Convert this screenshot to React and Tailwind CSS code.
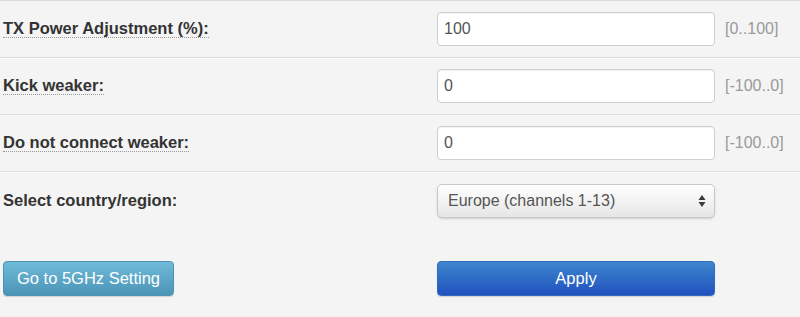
import { useState } from "react";

const rows = [
  { label: "TX Power Adjustment (%):", value: "100", range: "[0..100]" },
  { label: "Kick weaker:", value: "0", range: "[-100..0]" },
  { label: "Do not connect weaker:", value: "0", range: "[-100..0]" },
];

export default function App() {
  const [values, setValues] = useState(rows.map((r) => r.value));
  const [country, setCountry] = useState("eu");

  return (
    <div
      className="w-[800px] h-[317px] bg-[#f4f4f4] text-[#333] overflow-hidden"
      style={{ fontFamily: '"Liberation Sans", Arial, sans-serif' }}
    >
      <div className="border-t border-[#dcdcdc]">
        {rows.map((row, i) => (
          <div
            key={row.label}
            className="flex items-center h-[57px] border-b border-[#dcdcdc] shadow-[0_1px_0_#fafafa]"
          >
            <div className="w-[437px] pl-[3px]">
              <span className="text-[16.5px] font-bold leading-[20px] border-b border-dotted border-[#999] cursor-help">
                {row.label}
              </span>
            </div>
            <input
              type="text"
              value={values[i]}
              onChange={(e) =>
                setValues((prev) => prev.map((v, j) => (j === i ? e.target.value : v)))
              }
              className="w-[278px] h-[34px] px-[6px] rounded-[4px] border border-[#cfcfcf] bg-white text-[16px] text-[#555] shadow-[inset_0_1px_1px_rgba(0,0,0,0.06)] outline-none"
            />
            <span className="ml-[10px] text-[16px] text-[#9a9a9a]">{row.range}</span>
          </div>
        ))}

        {/* Country */}
        <div className="flex items-center h-[57px]">
          <div className="w-[437px] pl-[3px]">
            <span className="text-[16.5px] font-bold">Select country/region:</span>
          </div>
          <div className="relative w-[278px] h-[34px]">
            <select
              value={country}
              onChange={(e) => setCountry(e.target.value)}
              className="appearance-none w-full h-full pl-[10px] pr-8 rounded-[5px] border border-[#c8c8c8] bg-gradient-to-b from-white to-[#e6e6e6] text-[16px] text-[#555] shadow-[0_1px_2px_rgba(0,0,0,0.15)] outline-none"
            >
              <option value="eu">Europe (channels 1-13)</option>
              <option value="us">USA (channels 1-11)</option>
            </select>
            <svg
              className="absolute right-[9px] top-[10px] pointer-events-none"
              width="8"
              height="14"
              viewBox="0 0 8 14"
            >
              <path d="M4 1 L7.5 6 H0.5 Z" fill="#3a3a3a" />
              <path d="M4 13 L7.5 8 H0.5 Z" fill="#3a3a3a" />
            </svg>
          </div>
        </div>
      </div>

      {/* Buttons */}
      <div className="flex items-center mt-[32px]">
        <div className="w-[437px] pl-[3px]">
          <button className="w-[171px] h-[35px] rounded-[4px] border border-[#4d93b3] bg-gradient-to-b from-[#6fbad9] to-[#4b94b6] text-white text-[16.5px] shadow-[0_1px_1px_rgba(0,0,0,0.15)]">
            Go to 5GHz Setting
          </button>
        </div>
        <button className="w-[278px] h-[35px] rounded-[4px] border border-[#2f6cc0] bg-gradient-to-b from-[#3f86cd] to-[#2250be] text-white text-[16.5px] shadow-[0_1px_1px_rgba(0,0,0,0.15)]">
          Apply
        </button>
      </div>
    </div>
  );
}
